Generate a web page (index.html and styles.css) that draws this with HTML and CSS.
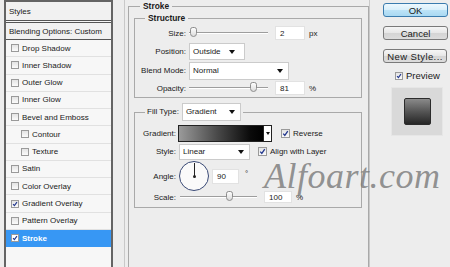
FILE: index.html
```html
<!DOCTYPE html>
<html lang="en">
<head>
    <meta charset="UTF-8">
    <meta name="viewport" content="width=device-width, initial-scale=1.0">
    <title>Layer Style - Stroke</title>
    <link rel="stylesheet" href="styles.css">
</head>
<body>
    <div class="dialog">
        <div class="styles-panel">
            <div class="panel-head">Styles</div>
            <div class="panel-head blend">Blending Options: Custom</div>
            <div class="style-item"><span class="check"></span>Drop Shadow</div>
            <div class="style-item"><span class="check"></span>Inner Shadow</div>
            <div class="style-item"><span class="check"></span>Outer Glow</div>
            <div class="style-item"><span class="check"></span>Inner Glow</div>
            <div class="style-item"><span class="check"></span>Bevel and Emboss</div>
            <div class="style-item sub"><span class="check"></span>Contour</div>
            <div class="style-item sub"><span class="check"></span>Texture</div>
            <div class="style-item"><span class="check"></span>Satin</div>
            <div class="style-item"><span class="check"></span>Color Overlay</div>
            <div class="style-item"><span class="check on"><svg viewBox="0 0 8 8"><path d="M1.4 4.2 L3.2 6.2 L6.6 1.4"/></svg></span>Gradient Overlay</div>
            <div class="style-item"><span class="check"></span>Pattern Overlay</div>
            <div class="style-item selected"><span class="check on"><svg viewBox="0 0 8 8"><path d="M1.4 4.2 L3.2 6.2 L6.6 1.4"/></svg></span>Stroke</div>
        </div>

        <div class="settings">
            <fieldset class="group stroke-group">
                <legend>Stroke</legend>

                <fieldset class="group structure">
                    <legend>Structure</legend>
                    <div class="form">
                        <label>Size:</label>
                        <div class="field">
                            <div class="slider"><span class="knob" style="left: 5%"></span></div>
                            <span class="num">2</span><span class="unit">px</span>
                        </div>

                        <label>Position:</label>
                        <div class="field">
                            <div class="select pos"><span>Outside</span><i class="arrow"></i></div>
                        </div>

                        <label>Blend Mode:</label>
                        <div class="field">
                            <div class="select blend-mode"><span>Normal</span><i class="arrow"></i></div>
                        </div>

                        <label>Opacity:</label>
                        <div class="field">
                            <div class="slider"><span class="knob" style="left: 81%"></span></div>
                            <span class="num">81</span><span class="unit">%</span>
                        </div>
                    </div>
                </fieldset>

                <fieldset class="group fill">
                    <legend>
                        <label>Fill Type:</label>
                        <div class="select fill-type"><span>Gradient</span><i class="arrow"></i></div>
                    </legend>
                    <div class="form">
                        <label>Gradient:</label>
                        <div class="field">
                            <div class="gradient-swatch"></div>
                            <div class="swatch-arrow"><i class="arrow"></i></div>
                            <span class="check on opt"><svg viewBox="0 0 8 8"><path d="M1.4 4.2 L3.2 6.2 L6.6 1.4"/></svg></span>
                            <span class="opt-label">Reverse</span>
                        </div>

                        <label>Style:</label>
                        <div class="field">
                            <div class="select style-type"><span>Linear</span><i class="arrow"></i></div>
                            <span class="check on opt align"><svg viewBox="0 0 8 8"><path d="M1.4 4.2 L3.2 6.2 L6.6 1.4"/></svg></span>
                            <span class="opt-label">Align with Layer</span>
                        </div>

                        <label>Angle:</label>
                        <div class="field">
                            <div class="dial"><span class="hand"></span></div>
                            <span class="num angle">90</span><span class="unit deg">°</span>
                        </div>

                        <label>Scale:</label>
                        <div class="field">
                            <div class="slider scale"><span class="knob" style="left: 64%"></span></div>
                            <span class="num scale-num">100</span><span class="unit">%</span>
                        </div>
                    </div>
                </fieldset>
            </fieldset>
        </div>

        <div class="actions">
            <div class="btn default">OK</div>
            <div class="btn">Cancel</div>
            <div class="btn wide">New Style...</div>
            <div class="preview-toggle">
                <span class="check on"><svg viewBox="0 0 8 8"><path d="M1.4 4.2 L3.2 6.2 L6.6 1.4"/></svg></span>
                <span>Preview</span>
            </div>
            <div class="preview-box"><div class="preview-square"></div></div>
        </div>

        <div class="watermark">Alfoart.com</div>
    </div>
</body>
</html>
```

FILE: styles.css
```css
* {
    box-sizing: border-box;
}
body {
    margin: 0;
    width: 450px;
    height: 267px;
    overflow: hidden;
    background-color: #ededed;
    font-family: "Liberation Sans", Arial, sans-serif;
    font-size: 8px;
    color: #1a1a1a;
}
.dialog {
    position: relative;
    display: flex;
    height: 267px;
}

/* left list */
.styles-panel {
    margin-left: 4px;
    width: 109px;
    height: 267px;
    border: 2px solid #646464;
    border-bottom: none;
    background-color: #f7f7f7;
}
.panel-head {
    height: 19px;
    padding-left: 3px;
    display: flex;
    align-items: center;
    background-color: #f1f1f1;
    border-bottom: 1px solid #555;
}
.panel-head.blend {
    height: 18px;
    margin-top: 1px;
    border-top: 1px solid #555;
}
.style-item {
    height: 17.27px;
    display: flex;
    align-items: center;
    padding-left: 5px;
    border-bottom: 1px solid #e1e1e1;
}
.style-item.sub {
    padding-left: 15px;
}
.style-item.selected {
    background-color: #3797f4;
    color: white;
    font-weight: bold;
    border-bottom-color: #3797f4;
}
.check {
    width: 8px;
    height: 8px;
    margin-right: 3px;
    border: 1px solid #9a9a9a;
    background: linear-gradient(#e4e4e4, #fbfbfb);
    display: inline-flex;
    flex-shrink: 0;
}
.check svg {
    width: 100%;
    height: 100%;
}
.check path {
    fill: none;
    stroke: #23388f;
    stroke-width: 1.5;
}
.selected .check {
    background: #fff;
}

/* middle settings */
.settings {
    margin-left: 11px;
    width: 245px;
    border-left: 1px solid #c9c9c9;
    padding-left: 3px;
}
.group {
    margin: 0;
    border: 1px solid #a9a9a9;
    min-width: 0;
}
.group legend {
    line-height: 12px;
    font-weight: bold;
    font-size: 8.4px;
}
.stroke-group {
    width: 241px;
    height: 280px;
    padding: 0 6px 0 5px;
    border-bottom: none;
}
.stroke-group > legend {
    margin-left: 6px;
    padding: 0 3px;
}
.structure {
    width: 228px;
    padding: 0 0 1px 0;
}
.structure > legend {
    margin-left: 10px;
    padding: 0 3px;
}
.form {
    display: grid;
    grid-template-columns: 51px 1fr;
    grid-template-rows: 18px 19px 19px 16px;
    column-gap: 3px;
    align-items: center;
}
.form label {
    text-align: right;
}
.field {
    display: flex;
    align-items: center;
}
.slider {
    position: relative;
    width: 79px;
    height: 2px;
    border-top: 1px solid #9d9d9d;
    border-bottom: 1px solid #fff;
}
.slider.scale {
    width: 77px;
    margin-left: 1px;
}
.knob {
    position: absolute;
    top: -6px;
    width: 7px;
    height: 10px;
    margin-left: -3px;
    border: 1px solid #8c8c8c;
    border-radius: 3px 3px 4px 4px;
    background: linear-gradient(#fdfdfd, #dcdcdc);
}
.num {
    margin-left: 7px;
    width: 30px;
    height: 14px;
    padding-left: 4px;
    background-color: #fff;
    border: 1px solid #e2e2e2;
    display: flex;
    align-items: center;
}
.unit {
    margin-left: 4px;
}
.select {
    height: 17px;
    display: flex;
    align-items: center;
    padding: 0 5px 0 3px;
    background-color: #fff;
    border: 1px solid #cbcbcb;
}
.select span {
    flex: 1;
}
.arrow {
    width: 0;
    height: 0;
    border-left: 3.5px solid transparent;
    border-right: 3.5px solid transparent;
    border-top: 4px solid #111;
}
.select.pos {
    width: 56px;
    padding-right: 9px;
}
.select.blend-mode {
    width: 100px;
    height: 18px;
}
.fill {
    width: 228px;
    margin-top: 5px;
    padding: 3px 0 4px 0;
}
.fill > legend {
    margin-left: 10px;
    padding: 0 2px;
    display: flex;
    align-items: center;
    font-weight: normal;
    font-size: 8px;
    line-height: 18px;
}
.select.fill-type {
    width: 59px;
    height: 18px;
    margin-left: 3px;
}
.fill .form {
    grid-template-columns: 41px 1fr;
    grid-template-rows: 18px 19px 30px 12px;
}
.gradient-swatch {
    width: 86px;
    height: 17px;
    margin-left: -1px;
    border: 1px solid #222;
    background: linear-gradient(to right, #9a9a9a, #4a4a4a 45%, #0a0a0a 85%, #000);
}
.swatch-arrow {
    width: 8px;
    height: 17px;
    border: 1px solid #222;
    border-left: none;
    background-color: #fff;
    display: flex;
    align-items: center;
    justify-content: center;
}
.swatch-arrow .arrow {
    border-left-width: 2.5px;
    border-right-width: 2.5px;
    border-top-width: 3px;
}
.check.opt {
    margin-left: 9px;
    margin-right: 3px;
    width: 9px;
    height: 9px;
}
.check.opt.align {
    margin-left: 8px;
}
.select.style-type {
    width: 71px;
    height: 16px;
}
.dial {
    position: relative;
    width: 30px;
    height: 30px;
    border: 1px solid #3a4a76;
    border-radius: 50%;
    background-color: #fafafa;
}
.hand {
    position: absolute;
    left: 14px;
    top: 1px;
    width: 1px;
    height: 13px;
    background-color: #222;
}
.hand::after {
    content: "";
    position: absolute;
    left: -1px;
    bottom: -2px;
    width: 3px;
    height: 3px;
    border-radius: 50%;
    background-color: #222;
}
.num.angle {
    margin-left: 3px;
    width: 27px;
    height: 15px;
}
.unit.deg {
    margin-left: 6px;
    align-self: flex-start;
    margin-top: 8px;
}
.num.scale-num {
    margin-left: 7px;
    width: 28px;
    height: 12px;
}

/* right buttons */
.actions {
    width: 80px;
    border-left: 1px solid #c9c9c9;
    padding: 3px 0 0 13px;
}
.btn {
    width: 65px;
    height: 14px;
    margin-bottom: 9px;
    display: flex;
    align-items: center;
    justify-content: center;
    font-size: 9.5px;
    border: 1px solid #7a7a7a;
    border-radius: 3px;
    background: linear-gradient(#f6f6f6, #e6e6e6 50%, #d4d4d4 51%, #dcdcdc);
}
.btn.default {
    border-color: #3b7cae;
    background: linear-gradient(#eef8fe, #d8effb 50%, #bde3f7 51%, #a9d9f2);
}
.btn.wide {
    width: 64px;
    letter-spacing: 0.4px;
    margin-bottom: 7px;
}
.preview-toggle {
    display: flex;
    align-items: center;
    padding-left: 12px;
    font-size: 9.5px;
}
.preview-toggle .check {
    width: 8px;
    height: 8px;
}
.preview-box {
    width: 52px;
    height: 49px;
    margin: 6px 0 0 8px;
    background-color: #d9d9d9;
    border: 1px solid #e6e6e6;
    display: flex;
    align-items: center;
    justify-content: center;
}
.preview-square {
    width: 27px;
    height: 27px;
    border: 1px solid #2b2b2b;
    border-radius: 2px;
    background: linear-gradient(#8a8a8a, #555 50%, #262626);
}

.watermark {
    position: absolute;
    left: 264px;
    top: 158px;
    line-height: 36px;
    font-family: "Liberation Serif", "Times New Roman", serif;
    font-style: italic;
    font-size: 36px;
    color: rgba(120, 120, 120, 0.8);
    letter-spacing: 0.5px;
}
```
